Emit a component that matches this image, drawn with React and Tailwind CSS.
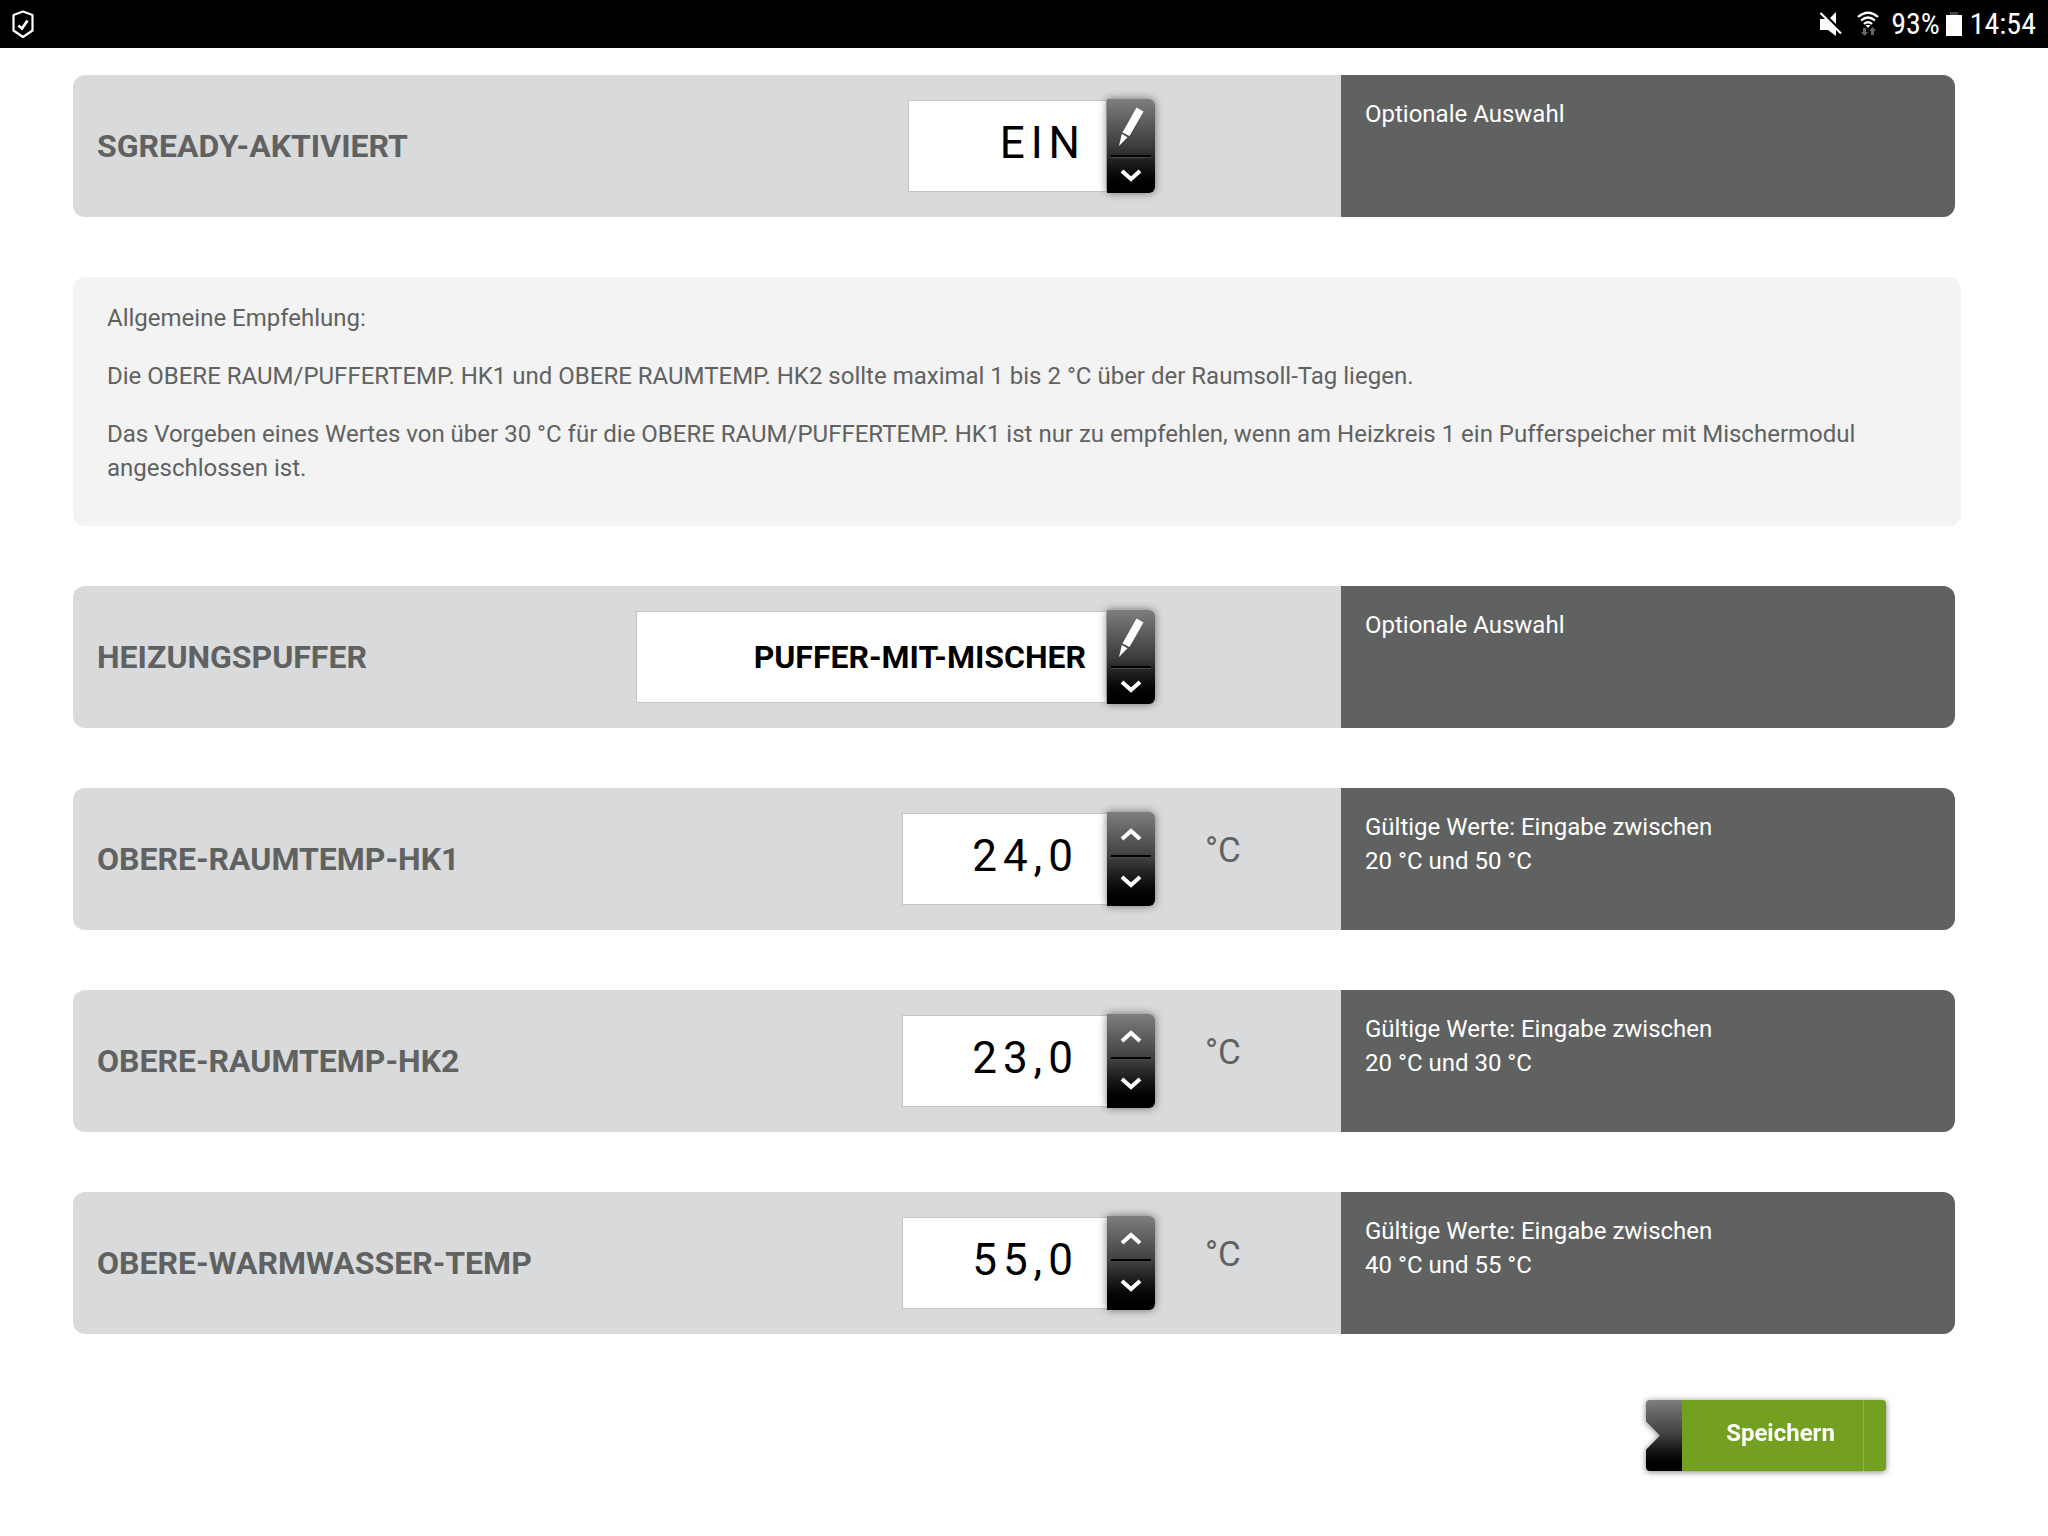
import { useState } from 'react'

const SETTINGS = {
  sgready: {
    id: 'sgready-aktiviert',
    label: 'SGREADY-AKTIVIERT',
    value: 'EIN',
    options: ['AUS', 'EIN'],
    info: ['Optionale Auswahl'],
  },
  buffer: {
    id: 'heizungspuffer',
    label: 'HEIZUNGSPUFFER',
    value: 'PUFFER-MIT-MISCHER',
    options: ['KEIN-PUFFER', 'PUFFER-OHNE-MISCHER', 'PUFFER-MIT-MISCHER'],
    info: ['Optionale Auswahl'],
    wide: true,
  },
}

const TEMPERATURES = [
  { id: 'obere-raumtemp-hk1', label: 'OBERE-RAUMTEMP-HK1', value: 24, min: 20, max: 50 },
  { id: 'obere-raumtemp-hk2', label: 'OBERE-RAUMTEMP-HK2', value: 23, min: 20, max: 30 },
  { id: 'obere-warmwasser-temp', label: 'OBERE-WARMWASSER-TEMP', value: 55, min: 40, max: 55 },
]

const formatTemp = (value) => value.toFixed(1).replace('.', ',')

function Chevron({ up }) {
  return (
    <svg width="22" height="14" viewBox="0 0 22 14" fill="none" stroke="#fff" strokeWidth="4">
      <path d={up ? 'M2 12 L11 4 L20 12' : 'M2 2 L11 10 L20 2'} />
    </svg>
  )
}

function Pencil() {
  return (
    <svg width="26" height="40" viewBox="0 0 26 40" fill="#fff">
      <path d="M18.5 0.5 L25.5 4.5 L11.5 29 L4.5 25.5 Z" />
      <path d="M3.8 27 L9.5 30.2 L1 39 Z" />
    </svg>
  )
}

function StatusBar() {
  return (
    <header className="flex h-12 items-center justify-between bg-black px-3 text-white">
      <svg width="22" height="29" viewBox="0 0 22 29" fill="none" stroke="#fff" strokeWidth="2.2">
        <path d="M11 1.5 L20.5 5 V20.5 L11 27 L1.5 20.5 V5 Z" strokeLinejoin="round" />
        <path d="M6.5 15.5 L10 18.5 L15.5 10.5" strokeWidth="2.8" />
      </svg>
      <div className="flex items-center">
        <svg className="mr-3.5" width="24" height="26" viewBox="0 0 24 26" fill="#fff">
          <path d="M1 8 H6.5 L17 18 V25 L9 19 H1 Z" />
          <path d="M17 1 V13 L11 7 Z" />
          <path d="M1.5 2 L22 22.5" stroke="#fff" strokeWidth="2.2" />
        </svg>
        <svg className="mr-3" width="22" height="26" viewBox="0 0 22 26" fill="none" stroke="#fff" strokeWidth="2.2">
          <path d="M1 6 Q11 -2.5 21 6" />
          <path d="M4 9.5 Q11 3.5 18 9.5" />
          <path d="M7 13 Q11 9.5 15 13" />
          <path d="M8.5 14 H13.5 L11 17 Z" fill="#fff" stroke="none" />
          <path d="M6 17 H9 V21 H11 L7.5 25 L4 21 H6 Z" fill="#666" stroke="none" />
          <path d="M14 24 V20 H12 L15.5 16 L19 20 H17 V24 Z" fill="#666" stroke="none" />
        </svg>
        <span className="font-['Roboto_Condensed',Roboto,sans-serif] text-[30px] leading-none">93%</span>
        <svg className="mr-2 ml-1.5" width="16" height="24" viewBox="0 0 16 24">
          <path d="M4 0 H12 V3 H4 Z" fill="#444" />
          <path d="M0 3 H16 V24 H0 Z" fill="#fff" />
        </svg>
        <span className="font-['Roboto_Condensed',Roboto,sans-serif] text-[30px] leading-none">14:54</span>
      </div>
    </header>
  )
}

function ButtonStack({ children }) {
  return (
    <div className="flex h-[94px] w-12 flex-col rounded-r-md bg-linear-to-b from-[#7d7e80] via-[#3c3d3e] to-black shadow-[0_0_8px_rgba(0,0,0,0.5)]">
      {children}
    </div>
  )
}

function Divider() {
  return <div className="mx-1 h-[3px] shrink-0 border-b border-[#4a4a4a] bg-black" />
}

function SettingRow({ id, label, unit, info, children }) {
  return (
    <section className="mr-1.5 flex overflow-hidden rounded-xl bg-[#d9dadc] text-[#606261]">
      <div className="flex flex-1 items-center py-6 pl-6">
        <label htmlFor={id} className="flex-1 text-[32px] leading-10 font-bold">
          {label}
        </label>
        <div className="flex items-center">{children}</div>
        <div className="w-[186px] pb-4 pl-[50px] text-[35px] leading-10">{unit}</div>
      </div>
      <div className="w-[614px] bg-[#606261] px-6 pt-[22px] text-2xl leading-[34px] text-white">
        {info.map((line) => (
          <p key={line}>{line}</p>
        ))}
      </div>
    </section>
  )
}

function SelectRow({ id, label, value: initial, options, info, wide }) {
  const [value, setValue] = useState(initial)

  const step = (delta) => {
    const next = (options.indexOf(value) + delta + options.length) % options.length
    setValue(options[next])
  }

  return (
    <SettingRow id={id} label={label} info={info}>
      <select
        id={id}
        value={value}
        onChange={(e) => setValue(e.target.value)}
        className={`h-[92px] appearance-none border border-[#c4c4c4] bg-white pr-5 text-right text-black [text-align-last:right] ${
          wide ? 'w-[471px] text-[32px] font-bold' : 'w-[199px] pb-1.5 text-[44px] tracking-[6px]'
        }`}
      >
        {options.map((option) => (
          <option key={option}>{option}</option>
        ))}
      </select>
      <ButtonStack>
        <button
          type="button"
          aria-label={`${label} bearbeiten`}
          onClick={() => step(-1)}
          className="flex h-14 items-center justify-center"
        >
          <Pencil />
        </button>
        <Divider />
        <button
          type="button"
          aria-label={`${label} weiter`}
          onClick={() => step(1)}
          className="flex flex-1 items-center justify-center"
        >
          <Chevron />
        </button>
      </ButtonStack>
    </SettingRow>
  )
}

function TemperatureRow({ id, label, value: initial, min, max }) {
  const [text, setText] = useState(formatTemp(initial))

  const step = (delta) => {
    const current = parseFloat(text.replace(',', '.')) || min
    setText(formatTemp(Math.min(max, Math.max(min, current + delta))))
  }

  const info = ['Gültige Werte: Eingabe zwischen', `${min} °C und ${max} °C`]

  return (
    <SettingRow id={id} label={label} unit="°C" info={info}>
      <input
        id={id}
        type="text"
        inputMode="decimal"
        value={text}
        onChange={(e) => setText(e.target.value)}
        className="h-[92px] w-[205px] border border-r-0 border-[#c4c4c4] bg-white pr-7 pb-1.5 text-right text-[44px] tracking-[6px] text-black"
      />
      <ButtonStack>
        <button
          type="button"
          aria-label={`${label} erhöhen`}
          onClick={() => step(0.5)}
          className="flex h-[43px] items-center justify-center"
        >
          <Chevron up />
        </button>
        <Divider />
        <button
          type="button"
          aria-label={`${label} verringern`}
          onClick={() => step(-0.5)}
          className="flex flex-1 items-center justify-center"
        >
          <Chevron />
        </button>
      </ButtonStack>
    </SettingRow>
  )
}

function Recommendation() {
  return (
    <section className="flex flex-col gap-6 rounded-xl bg-[#f3f3f3] px-[34px] pt-6 pb-[41px] text-2xl leading-[34px] text-[#606261]">
      <p>Allgemeine Empfehlung:</p>
      <p>
        Die OBERE RAUM/PUFFERTEMP. HK1 und OBERE RAUMTEMP. HK2 sollte maximal 1 bis 2 °C über der
        Raumsoll-Tag liegen.
      </p>
      <p>
        Das Vorgeben eines Wertes von über 30 °C für die OBERE RAUM/PUFFERTEMP. HK1 ist nur zu
        empfehlen, wenn am Heizkreis 1 ein Pufferspeicher mit Mischermodul angeschlossen ist.
      </p>
    </section>
  )
}

export default function App() {
  return (
    <div className="min-h-screen bg-white font-[Roboto,sans-serif]">
      <StatusBar />
      <form
        onSubmit={(e) => e.preventDefault()}
        className="flex flex-col gap-[60px] pt-[27px] pr-[87px] pb-16 pl-[73px]"
      >
        <SelectRow {...SETTINGS.sgready} />
        <Recommendation />
        <SelectRow {...SETTINGS.buffer} />
        {TEMPERATURES.map((item) => (
          <TemperatureRow key={item.id} {...item} />
        ))}
        <div className="flex justify-end pt-1.5 pr-[75px]">
          <button
            type="submit"
            className="flex h-[71px] text-2xl font-bold text-white drop-shadow-[0_1px_3px_rgba(0,0,0,0.5)]"
          >
            <span className="h-full w-9 rounded-l bg-linear-to-b from-[#7d7e80] via-[#3c3d3e] to-black [clip-path:polygon(0_0,100%_0,100%_100%,0_100%,0_70%,14px_50%,0_30%)]" />
            <span className="flex h-full w-[182px] items-center justify-center border-r border-[#8fb54a] bg-[#74a020] pb-1.5 pl-4">
              Speichern
            </span>
            <span className="h-full w-[22px] rounded-r bg-[#74a020]" />
          </button>
        </div>
      </form>
    </div>
  )
}
